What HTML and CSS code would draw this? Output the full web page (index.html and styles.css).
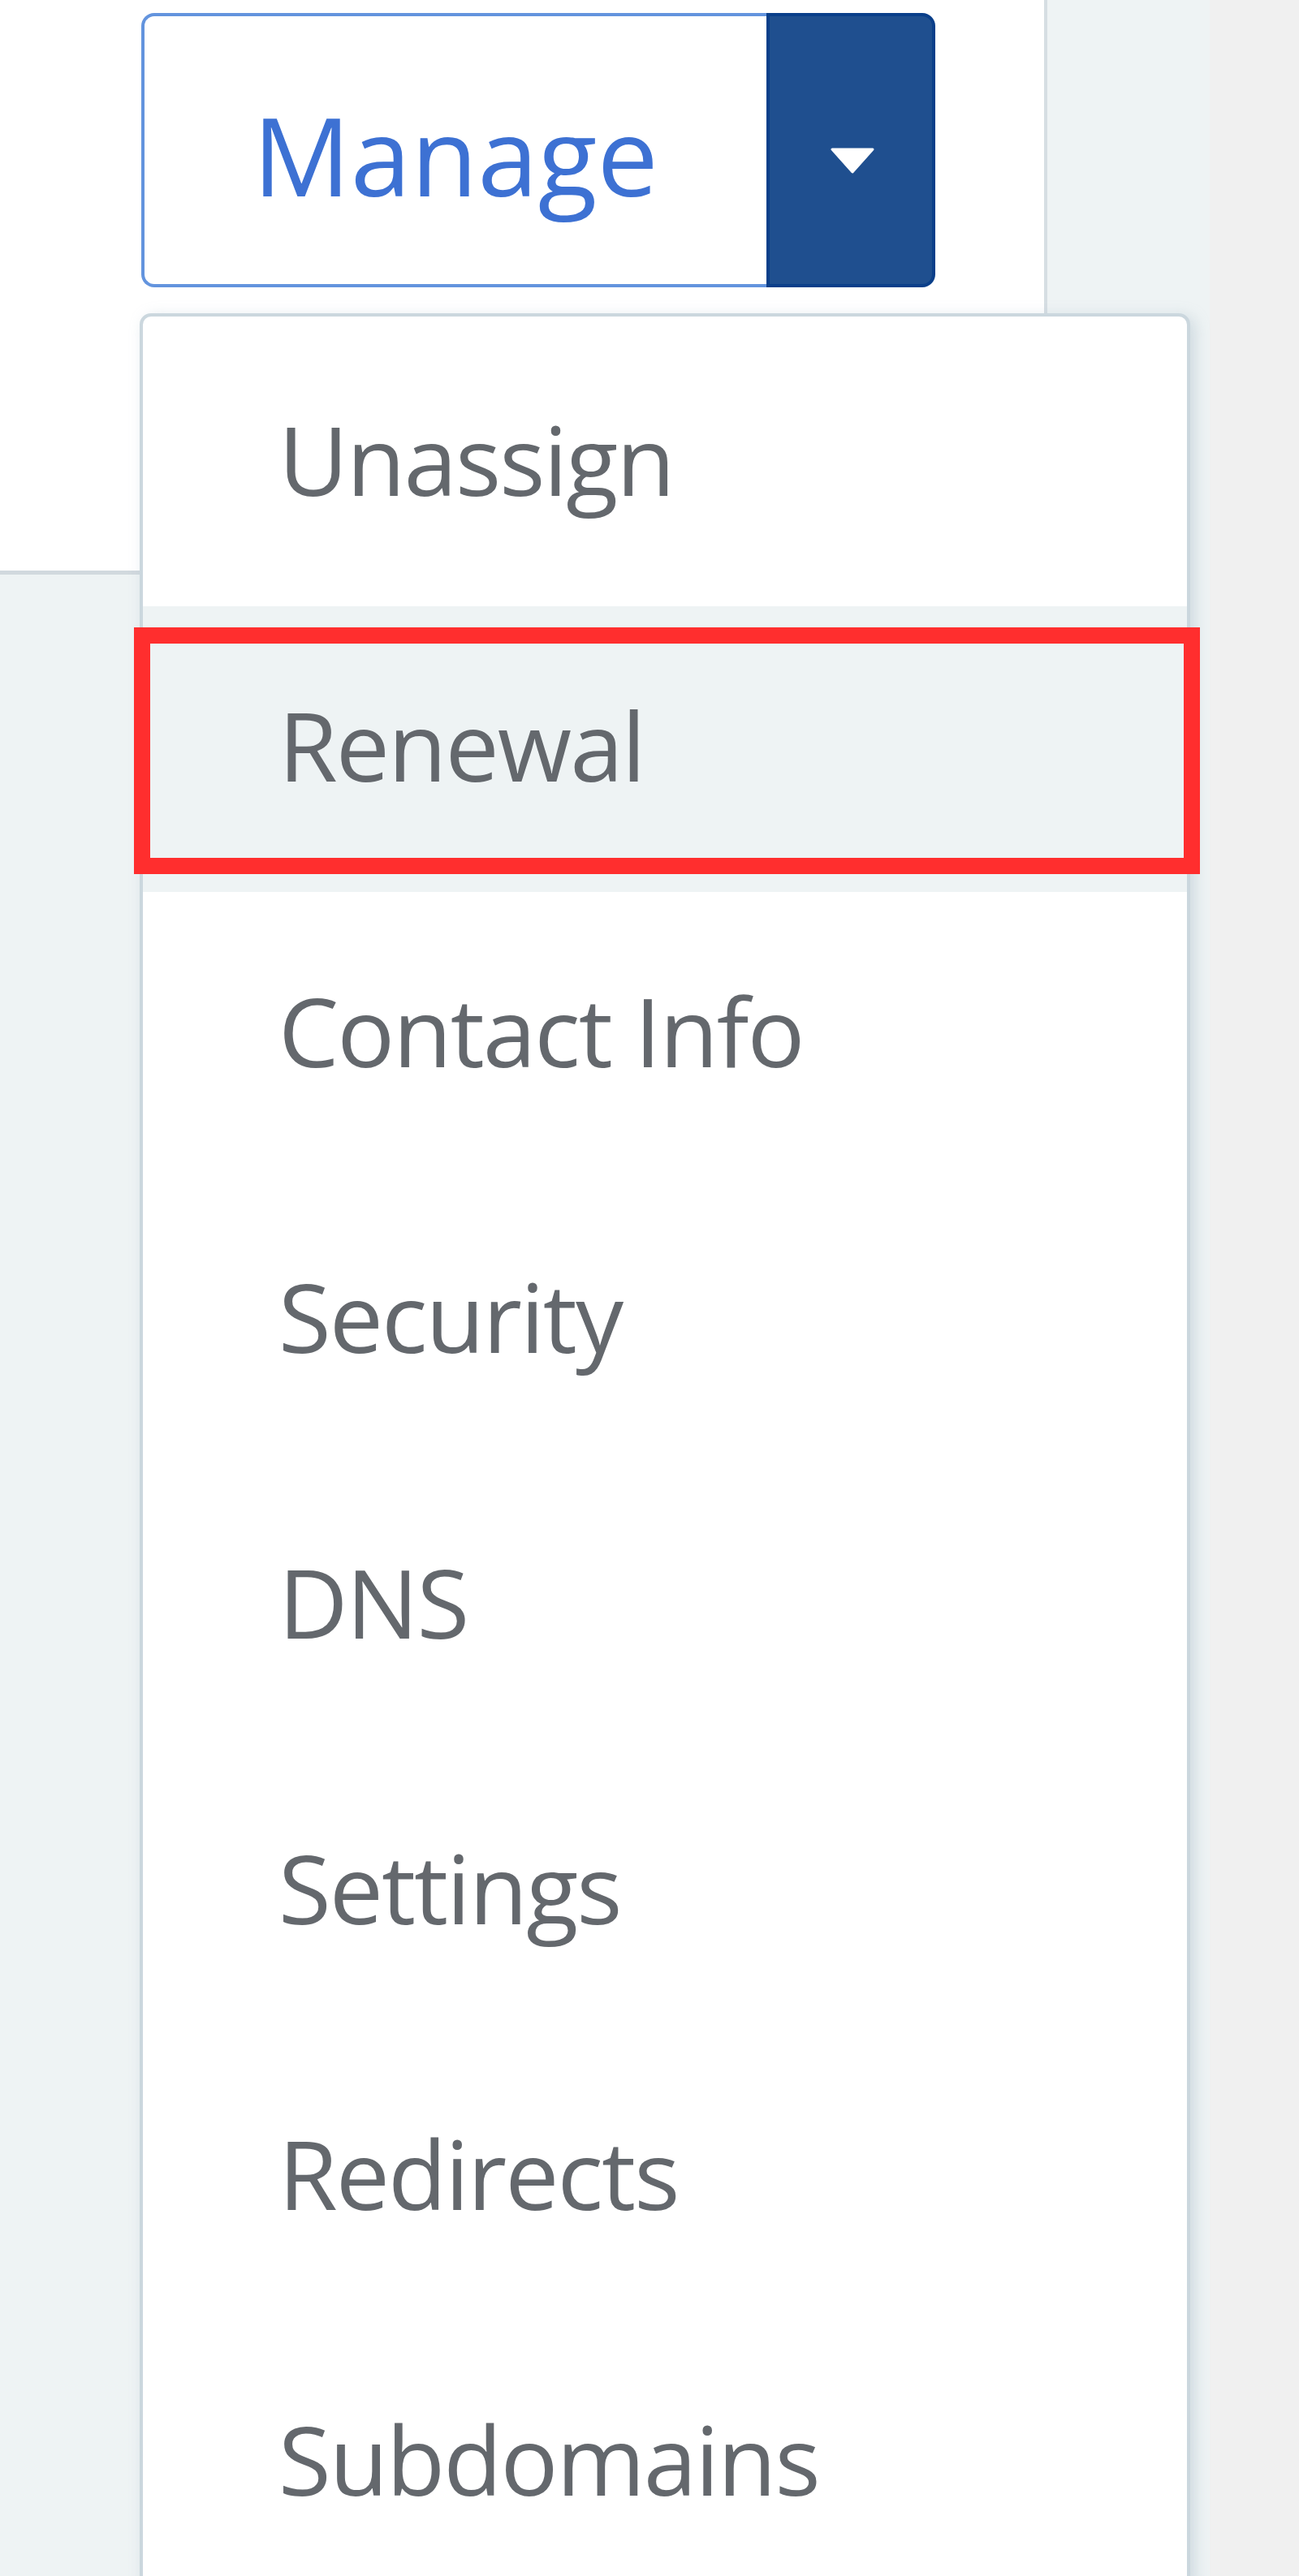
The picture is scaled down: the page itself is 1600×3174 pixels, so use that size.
FILE: index.html
```html
<!DOCTYPE html>
<html lang="en">
<head>
<meta charset="utf-8">
<title>Manage menu</title>
<link rel="stylesheet" href="styles.css">
</head>
<body>
<div class="page">
  <div class="main">
    <div class="card">
      <div class="btn-group">
        <button class="btn-main">Manage</button>
        <button class="btn-caret" aria-label="Toggle menu">
          <svg class="caret" viewBox="0 0 54 32" width="54" height="32"><polygon points="2,2 52,2 27,30" fill="#ffffff" stroke="#ffffff" stroke-width="3" stroke-linejoin="round"/></svg>
        </button>
      </div>
    </div>
    <ul class="menu">
      <li class="item">Unassign</li>
      <li class="item active">Renewal</li>
      <li class="item">Contact Info</li>
      <li class="item">Security</li>
      <li class="item">DNS</li>
      <li class="item">Settings</li>
      <li class="item">Redirects</li>
      <li class="item">Subdomains</li>
    </ul>
  </div>
</div>
</body>
</html>
```

FILE: styles.css
```css
html, body {
  margin: 0;
  padding: 0;
}
body {
  width: 1600px;
  height: 3174px;
  overflow: hidden;
  background: #f0f0f0;
  font-family: "Open Sans", "Noto Sans", "DejaVu Sans", sans-serif;
}
.page {
  display: flex;
  height: 3174px;
}
.main {
  position: relative;
  width: 1490px;
  height: 3174px;
  background: #eef3f4;
}
.card {
  box-sizing: border-box;
  width: 1290px;
  height: 708px;
  background: #ffffff;
  border-right: 4px solid #d6dee3;
  border-bottom: 5px solid #d1d9de;
  padding: 16px 0 0 174px;
}
.btn-group {
  display: flex;
  width: 978px;
  height: 338px;
}
.btn-main {
  box-sizing: border-box;
  width: 770px;
  height: 338px;
  margin: 0;
  background: #ffffff;
  border: 4px solid #6394de;
  border-right: none;
  border-radius: 16px 0 0 16px;
  color: #3d71d3;
  font-family: "Open Sans", "Noto Sans", sans-serif;
  font-size: 134px;
  font-weight: 400;
  padding: 10px 0 0 0;
  text-align: center;
  letter-spacing: 0;
}
.btn-caret {
  box-sizing: border-box;
  width: 208px;
  height: 338px;
  margin: 0;
  padding: 0;
  background: #1f4f8f;
  border: 4px solid #0a3f8a;
  border-radius: 0 16px 16px 0;
  display: flex;
  align-items: center;
  justify-content: center;
}
.caret {
  display: block;
  margin-left: 4px;
  margin-top: 26px;
}
.menu {
  position: absolute;
  left: 172px;
  top: 386px;
  width: 1294px;
  box-sizing: border-box;
  margin: 0;
  padding: 5px 0 0 0;
  list-style: none;
  background: #ffffff;
  border: 4px solid #cbd7de;
  border-radius: 14px 14px 0 0;
  box-shadow: 6px 4px 18px rgba(150, 172, 188, 0.35);
  height: 2800px;
}
.item {
  position: relative;
  box-sizing: border-box;
  height: 352px;
  display: flex;
  align-items: center;
  padding: 0 0 12px 167px;
  color: #64686d;
  font-size: 118px;
  letter-spacing: -2px;
}
.item.active {
  background: #eef3f4;
}
.item.active::after {
  content: "";
  position: absolute;
  left: -11px;
  right: -16px;
  top: 26px;
  bottom: 22px;
  border: 20px solid #ff2e2e;
}
```
